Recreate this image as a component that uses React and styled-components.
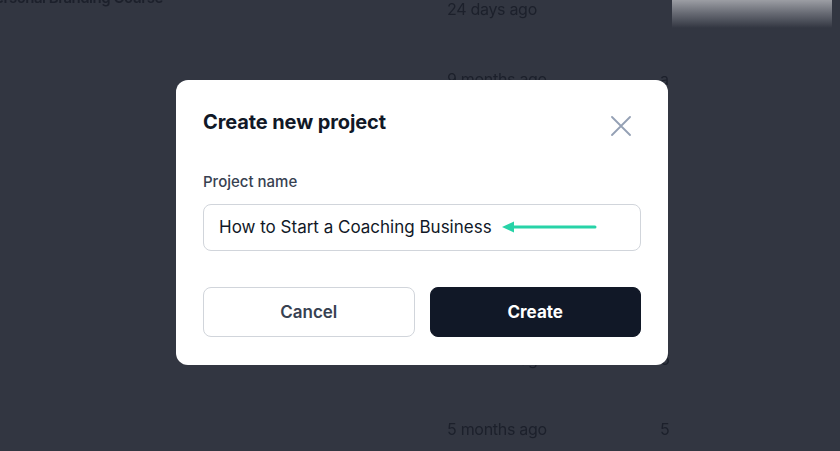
import styled, { createGlobalStyle } from "styled-components";

const GlobalStyle = createGlobalStyle`
  html, body {
    margin: 0;
    background: #323641;
    font-family: Inter, "Noto Sans", sans-serif;
  }
`;

// rows of the project list that sits behind the dialog
const rows = [
  { title: "Personal Branding Course", date: "24 days ago", count: "" },
  { title: "", date: "9 months ago", count: "a" },
  { title: "", date: "", count: "a" },
  { title: "", date: "", count: "" },
  { title: "", date: "", count: "" },
  { title: "", date: "6 months ago", count: "6" },
  { title: "", date: "5 months ago", count: "5" },
];

const App = () => {
  return (
    <>
      <GlobalStyle />
      <Page>
        <FadeCell />
        <List>
          {rows.map((r, i) => (
            <Row key={i}>
              <RowTitle>{r.title}</RowTitle>
              <RowDate>{r.date}</RowDate>
              <RowCount>{r.count}</RowCount>
            </Row>
          ))}
        </List>
      </Page>

      <Overlay>
        <Dialog>
          <Header>
            <Title>Create new project</Title>
            <CloseButton aria-label="Close">
              <svg width="20" height="20" viewBox="0 0 20 20" fill="none">
                <path d="M1 1L19 19M19 1L1 19" stroke="#94a0b4" strokeWidth="1.8" strokeLinecap="round" />
              </svg>
            </CloseButton>
          </Header>

          <Label>Project name</Label>
          <Field>
            <FieldText>How to Start a Coaching Business</FieldText>
            <svg width="96" height="14" viewBox="0 0 96 14" fill="none">
              <path d="M10 7H93" stroke="#27d3a7" strokeWidth="3" strokeLinecap="round" />
              <path d="M0 7L12 1.5V12.5Z" fill="#27d3a7" />
            </svg>
          </Field>

          <Actions>
            <Button>Cancel</Button>
            <Button $primary>Create</Button>
          </Actions>
        </Dialog>
      </Overlay>
    </>
  );
};

const Page = styled.div`
  position: relative;
  height: 451px;
  overflow: hidden;
  background: #323641;
  filter: blur(0.4px);
`;

const FadeCell = styled.div`
  position: absolute;
  top: 0;
  left: 672px;
  width: 160px;
  height: 28px;
  background: linear-gradient(to bottom, #9c9ea4 0%, #6a6d76 45%, #323641 100%);
`;

const List = styled.div`
  display: flex;
  flex-direction: column;
  margin-top: -26px;
`;

const Row = styled.div`
  display: grid;
  grid-template-columns: 447px 213px 1fr;
  height: 70px;
  align-items: center;
  color: #1c202b;
`;

const RowTitle = styled.div`
  margin-left: -14px;
  margin-top: -24px;
  font-size: 15px;
  font-weight: 600;
  letter-spacing: -0.5px;
  color: #1c202b;
  white-space: nowrap;
`;

const RowDate = styled.div`
  font-size: 16px;
  letter-spacing: -0.3px;
  color: #1c202b;
`;

const RowCount = styled.div`
  font-size: 16px;
  color: #1c202b;
`;

const Overlay = styled.div`
  position: fixed;
  inset: 0;
  display: flex;
  align-items: center;
  justify-content: center;
  padding-left: 4px;
  padding-bottom: 7px;
`;

const Dialog = styled.div`
  width: 492px;
  box-sizing: border-box;
  padding: 30px 27px 28px;
  background: #ffffff;
  border-radius: 12px;
  display: flex;
  flex-direction: column;
`;

const Header = styled.div`
  display: flex;
  justify-content: space-between;
  align-items: flex-start;
`;

const Title = styled.h2`
  margin: 0;
  font-size: 20px;
  line-height: 24px;
  font-weight: 700;
  color: #111827;
  letter-spacing: -0.1px;
`;

const CloseButton = styled.button`
  margin: 6px 10px 0 0;
  padding: 0;
  border: none;
  background: none;
  display: flex;
`;

const Label = styled.label`
  margin-top: 36px;
  font-size: 15px;
  line-height: 20px;
  font-weight: 500;
  color: #374151;
`;

const Field = styled.div`
  margin-top: 12px;
  height: 47px;
  box-sizing: border-box;
  padding: 0 15px;
  border: 1px solid #d1d5db;
  border-radius: 8px;
  display: flex;
  align-items: center;
  gap: 10px;
`;

const FieldText = styled.span`
  font-size: 17px;
  color: #111827;
  white-space: nowrap;
`;

const Actions = styled.div`
  margin-top: 36px;
  display: grid;
  grid-template-columns: 1fr 1fr;
  gap: 15px;
`;

const Button = styled.button`
  height: 50px;
  border-radius: 8px;
  font-family: Inter, "Noto Sans", sans-serif;
  font-size: 17px;
  font-weight: ${(p) => (p.$primary ? 700 : 600)};
  color: ${(p) => (p.$primary ? "#ffffff" : "#374151")};
  background: ${(p) => (p.$primary ? "#111827" : "#ffffff")};
  border: 1px solid ${(p) => (p.$primary ? "#111827" : "#d1d5db")};
`;

export default App;
